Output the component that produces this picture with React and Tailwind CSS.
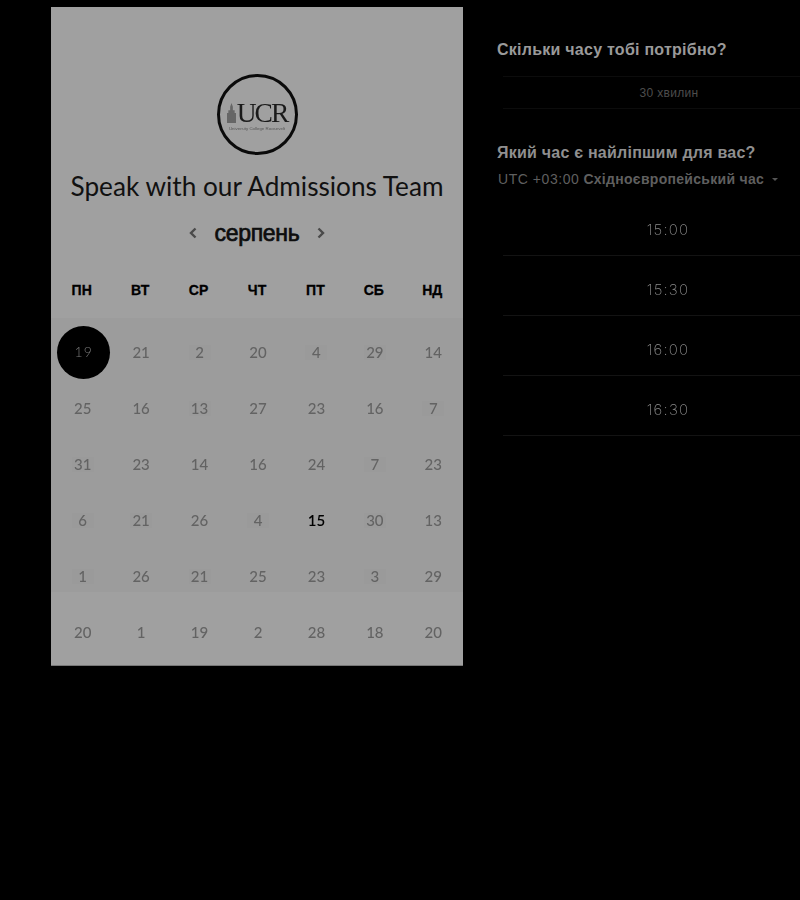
const rows = [
  [19, 21, 2, 20, 4, 29, 14],
  [25, 16, 13, 27, 23, 16, 7],
  [31, 23, 14, 16, 24, 7, 23],
  [6, 21, 26, 4, 15, 30, 13],
  [1, 26, 21, 25, 23, 3, 29],
  [20, 1, 19, 2, 28, 18, 20],
];
const chips = ["0-2", "0-4", "0-5", "1-2", "1-6", "2-0", "2-5", "3-0", "3-1", "3-3", "3-5", "4-0", "4-2", "4-5"];
const days = ["ПН", "ВТ", "СР", "ЧТ", "ПТ", "СБ", "НД"];
const times = ["15:00", "15:30", "16:00", "16:30"];
const sans = { fontFamily: '"Liberation Sans", Arial, sans-serif' };

function Logo() {
  return (
    <div className="w-[81px] h-[81px] rounded-full border-[3px] border-[#0a0a0a] flex flex-col items-center justify-center blur-[0.3px]">
      <div className="flex items-end mt-[3px]">
        <svg width="9" height="22" viewBox="0 0 10 22" className="text-[#666] mb-[1px] mr-[1px]">
          <path d="M0 22V11h1.500V8h2V4L5 0l1.500 4v4h2v3H10v11z" fill="currentColor" />
        </svg>
        <span className="text-[#1a1a1a] text-[27.5px] leading-[24px] tracking-[-2px] font-['Liberation_Serif',serif]">UCR</span>
      </div>
      <span className="text-[#555] text-[4.400px] leading-[5px] mt-[1px] font-['Liberation_Sans',sans-serif] whitespace-nowrap">University College Roosevelt</span>
    </div>
  );
}

function Chevron({ d }) {
  return (
    <svg width="10" height="12" viewBox="0 0 10 12" fill="none" stroke="#4a4a4a" strokeWidth="2.400">
      <path d={d} />
    </svg>
  );
}

function Row({ row, i }) {
  return (
    <div className="grid grid-cols-7 h-[56px] shrink-0">
      {row.map((n, j) => {
        const selected = i === 0 && j === 0;
        const today = n === 15;
        const chip = chips.includes(i + "-" + j);
        return (
          <div key={j} className="flex items-center justify-center">
            {selected ? (
              <div className="w-[53px] h-[53px] rounded-full bg-black flex items-center justify-center text-[14px] font-light tracking-[1px] text-[#777] ml-[2px]">
                <span className="mb-[2px] [will-change:opacity]">{n}</span>
              </div>
            ) : (
              <span className={(chip ? "bg-[#9a9a9a] min-w-[22px] text-center " : "") + (today ? "text-[15px] leading-[15px] font-semibold text-black [will-change:opacity]" : "text-[15px] leading-[15px] font-medium text-[#636363] [will-change:opacity]")}>{n}</span>
            )}
          </div>
        );
      })}
    </div>
  );
}

export default function App() {
  return (
    <div className="w-[800px] h-[900px] bg-black overflow-hidden flex pl-[51px] pt-[7px]">
      <div className="w-[412px] h-[659px] shrink-0 bg-[#a0a0a0] flex flex-col items-center border-b border-[#777] pt-[67px] font-['Lato',sans-serif]">
        <Logo />
        <h1 className="mt-[15px] text-[26.2px] leading-[32px] text-[#111] font-normal whitespace-nowrap">Speak with our Admissions Team</h1>
        <div className="flex items-center gap-[16.500px] mt-[15px] h-[32px]">
          <Chevron d="M7.500 1.500L3 6l4.500 4.500" />
          <span style={sans} className="text-[23px] font-normal text-[#0d0d0d] tracking-[-0.3px] [-webkit-text-stroke:0.7px_#0d0d0d]">серпень</span>
          <Chevron d="M2.500 1.500L7 6l-4.500 4.500" />
        </div>
        <div className="w-full pl-[2.500px] pr-[0.500px] mt-[20px] grid grid-cols-7 h-[42px] items-center">
          {days.map((d) => (
            <div key={d} style={sans} className="text-center text-[14px] font-bold text-black pr-[2px] [-webkit-text-stroke:0.3px_#000]">{d}</div>
          ))}
        </div>
        <div className="w-full h-[274px] pl-[2.500px] pr-[0.500px] pt-[6px] mt-[7px] flex flex-col bg-[#9c9c9c]">
          {rows.slice(0, 5).map((row, i) => (
            <Row key={i} row={row} i={i} />
          ))}
        </div>
        <div className="w-full pl-[2.500px] pr-[0.500px] mt-[12px]">
          <Row row={rows[5]} i={5} />
        </div>
      </div>
      <div className="w-[338px] shrink-0 ml-[34px]" style={sans}>
        <h2 className="mt-[33px] text-[16px] leading-[20px] font-bold text-[#9a9a9a] tracking-[0.25px] whitespace-nowrap">Скільки часу тобі потрібно?</h2>
        <div className="mt-[16px] ml-[6px] h-[33px] border-y border-[#0c0c0c] flex items-center justify-center">
          <span className="text-[12px] text-[#4d4d4d] tracking-[0.3px]">30 хвилин</span>
        </div>
        <h2 className="mt-[34px] text-[16px] leading-[20px] font-bold text-[#8f8f8f] tracking-[0.23px] whitespace-nowrap">Який час є найліпшим для вас?</h2>
        <div className="mt-[7px] ml-[1px] flex items-center text-[14px] leading-[18px] text-[#5f5f5f] whitespace-nowrap">
          <span className="tracking-[0.55px]">UTC +03:00</span>
          <span className="font-bold ml-[4px] tracking-[0.3px]">Східноєвропейський час</span>
          <span className="ml-[8px] w-0 h-0 border-x-[3px] border-x-transparent border-t-[3px] border-t-[#555]"></span>
        </div>
        <div className="mt-[8px] ml-[6px] flex flex-col">
          {times.map((t) => (
            <div key={t} className="h-[60px] pt-[9px] border-b border-[#131313] flex items-center justify-center">
              <span className="font-['Inter',sans-serif] font-extralight text-[15px] tracking-[1.200px] text-[#8a8a8a] -ml-[2px] [will-change:opacity]">{t}</span>
            </div>
          ))}
        </div>
      </div>
    </div>
  );
}
